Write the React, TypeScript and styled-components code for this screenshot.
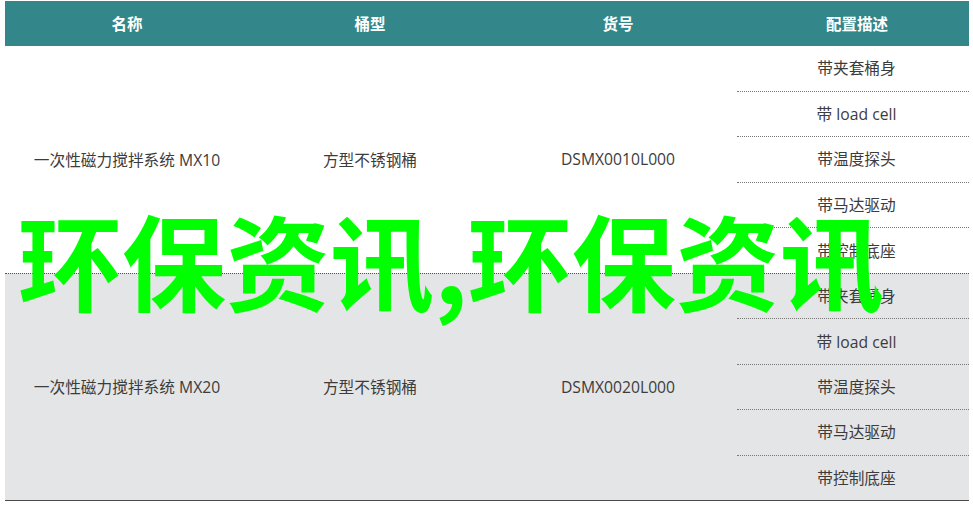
import React from 'react'
import styled, { createGlobalStyle } from 'styled-components'

const groups = [
  { name: '一次性磁力搅拌系统 MX10', type: '方型不锈钢桶', code: 'DSMX0010L000', shaded: false },
  { name: '一次性磁力搅拌系统 MX20', type: '方型不锈钢桶', code: 'DSMX0020L000', shaded: true },
]

const configs = ['带夹套桶身', '带 load cell', '带温度探头', '带马达驱动', '带控制底座']

const App: React.FC = () => (
  <Root>
    <GlobalStyle />
    <Table>
      <Header>
        <HeadCell>名称</HeadCell>
        <HeadCell>桶型</HeadCell>
        <HeadCell>货号</HeadCell>
        <HeadCell>配置描述</HeadCell>
      </Header>
      {groups.map((group) => (
        <Group key={group.code} $shaded={group.shaded}>
          <Cell>{group.name}</Cell>
          <Cell>{group.type}</Cell>
          <Cell>{group.code}</Cell>
          <ConfigList>
            {configs.map((config) => (
              <ConfigItem key={config}>{config}</ConfigItem>
            ))}
          </ConfigList>
        </Group>
      ))}
    </Table>
    <Title>环保资讯,环保资讯</Title>
  </Root>
)

export default App

const GlobalStyle = createGlobalStyle`
  html, body {
    margin: 0;
    background: #fff;
  }
`

const Root = styled.div`
  position: relative;
  width: 973px;
  height: 505px;
  padding: 1px 4px 0 5px;
  box-sizing: border-box;
  overflow: hidden;
  font-family: 'Open Sans', 'Noto Sans CJK SC', sans-serif;
  color: #3c3c3c;
`

const columns = '244px 242px 254px 224px'

const Table = styled.div`
  border-bottom: 1px solid #4a4a4a;
`

const Header = styled.div`
  display: grid;
  grid-template-columns: ${columns};
  height: 45px;
  background: #33878b;
`

const HeadCell = styled.div`
  display: flex;
  align-items: center;
  justify-content: center;
  font-size: 15.5px;
  font-weight: 700;
  color: #fff;
`

const Group = styled.div<{ $shaded: boolean }>`
  display: grid;
  grid-template-columns: ${columns};
  height: 227px;
  box-sizing: border-box;
  background: ${(p) => (p.$shaded ? '#e4e5e7' : '#fff')};
  ${(p) => (p.$shaded ? 'border-top: 1px dotted #555;' : '')}
`

const Cell = styled.div`
  display: flex;
  align-items: center;
  justify-content: center;
  padding-bottom: 1px;
  font-size: 15.7px;
`

const ConfigList = styled.div`
  display: flex;
  flex-direction: column;
  margin-left: -8px;
`

const ConfigItem = styled.div`
  flex: 1;
  display: flex;
  align-items: center;
  justify-content: center;
  padding: 0 0 1px 7px;
  font-size: 15.7px;
  border-bottom: 1px dotted #777;

  &:last-child {
    border-bottom: 0;
  }
`

const Title = styled.div`
  position: absolute;
  left: 18px;
  top: 189px;
  font-family: 'Noto Sans CJK SC', sans-serif;
  font-size: 104px;
  line-height: 140px;
  font-weight: 700;
  white-space: nowrap;
  color: #00ff00;
`
